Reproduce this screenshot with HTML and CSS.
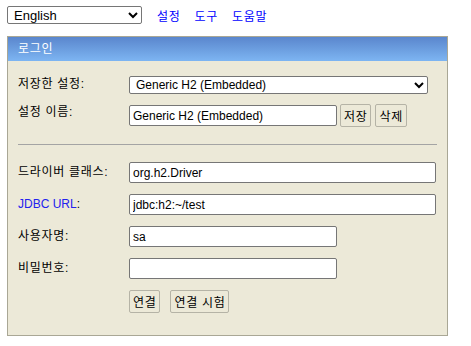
FILE: index.html
```html
<!DOCTYPE html>
<html lang="ko">
<head>
    <meta charset="UTF-8">
    <meta name="viewport" content="width=device-width, initial-scale=1.0">
    <title>H2 Console</title>
    <link rel="stylesheet" href="styles.css">
</head>
<body>
    <div class="topbar">
        <select class="lang">
            <option>English</option>
        </select>
        <a href="#" class="ko">설정</a>
        <a href="#" class="ko">도구</a>
        <a href="#" class="ko">도움말</a>
    </div>

    <div class="login">
        <div class="login-head ko">로그인</div>
        <div class="login-body">
            <div class="row row-select">
                <label class="ko">저장한 설정:</label>
                <select class="setting">
                    <option>Generic H2 (Embedded)</option>
                </select>
            </div>
            <div class="row row-buttons">
                <label class="ko">설정 이름:</label>
                <input type="text" class="field" value="Generic H2 (Embedded)">
                <button class="save ko">저장</button>
                <button class="ko">삭제</button>
            </div>

            <hr>

            <div class="row">
                <label class="ko">드라이버 클래스:</label>
                <input type="text" class="field long" value="org.h2.Driver">
            </div>
            <div class="row">
                <label><a href="#" class="help">JDBC URL</a>:</label>
                <input type="text" class="field long" value="jdbc:h2:~/test">
            </div>
            <div class="row">
                <label class="ko">사용자명:</label>
                <input type="text" class="field" value="sa">
            </div>
            <div class="row">
                <label class="ko">비밀번호:</label>
                <input type="password" class="field">
            </div>
            <div class="row row-actions">
                <label></label>
                <button class="ko">연결</button>
                <button class="ko">연결 시험</button>
            </div>
        </div>
    </div>
</body>
</html>
```

FILE: styles.css
```css
body {
    font-family: "Liberation Sans", "Noto Sans CJK KR", sans-serif;
    font-size: 12px;
    margin: 0;
    padding: 6px 7px;
    background: #fff;
    color: #000;
}
select, input, button {
    font-family: "Liberation Sans", "Noto Sans CJK KR", sans-serif;
    font-size: 12px;
    box-sizing: border-box;
    margin: 0;
}
a {
    color: #0000ff;
    text-decoration: none;
}
.ko {
    letter-spacing: 0.7px;
}
.topbar {
    display: flex;
    align-items: center;
    gap: 14px;
    height: 18px;
}
.lang {
    width: 135px;
    height: 18px;
    margin-right: 1px;
    padding: 0 2px;
    border: 1px solid #767676;
    border-radius: 2px;
    background: #fff;
    font-size: 13px;
}
.login {
    margin-top: 12px;
    width: 441px;
    box-sizing: border-box;
    border: 1px solid #a9a795;
    background: #ece9d8;
}
.login-head {
    height: 24px;
    line-height: 24px;
    padding-left: 10px;
    color: #fff;
    background: linear-gradient(#5a86cd, #7db5f2);
}
.login-body {
    padding: 15px 10px 22px 10px;
}
.row {
    display: flex;
    align-items: flex-start;
    height: 21px;
    margin-bottom: 11px;
}
.row label {
    width: 111px;
    flex: none;
    padding-top: 3px;
    line-height: 15px;
}
.row-select {
    height: 18px;
    margin-bottom: 10px;
}
.row-select label {
    padding-top: 1px;
}
.row-buttons {
    height: 23px;
    align-items: center;
    margin-bottom: 0;
}
.row-buttons label {
    align-self: flex-start;
    padding-top: 1px;
}
.row-actions {
    height: 23px;
    gap: 10px;
    margin-bottom: 0;
}
.row-actions label {
    width: 101px;
}
.setting {
    width: 299px;
    height: 18px;
    padding: 0 2px;
    border: 1px solid #767676;
    border-radius: 2px;
    background: #fff;
}
.field {
    width: 208px;
    height: 21px;
    padding: 1px 3px;
    border: 1px solid #767676;
    border-radius: 2px;
    background: #fff;
}
.field.long {
    width: 307px;
}
.help {
    color: #2222ee;
}
button {
    height: 23px;
    padding: 0 3px;
    border: 1px solid #b5b3a6;
    border-radius: 2px;
    background: #ece9d8;
    color: #000;
}
.save {
    margin-left: 3px;
    margin-right: 4px;
}
hr {
    border: none;
    border-top: 1px solid #a4a4a4;
    margin: 17px 0 17px 0;
}
```
